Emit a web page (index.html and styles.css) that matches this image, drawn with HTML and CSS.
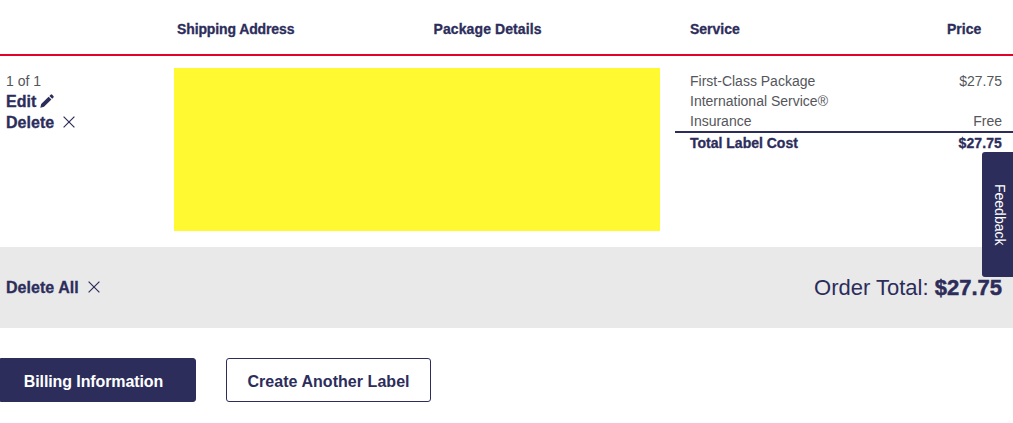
FILE: index.html
```
<!DOCTYPE html>
<html lang="en">
<head>
    <meta charset="UTF-8">
    <title>Shipping Cart</title>
    <link rel="stylesheet" href="styles.css">
</head>
<body>

<div class="cart">
    <div class="row cart_head">
        <div></div>
        <div class="ship">Shipping Address</div>
        <div class="pack">Package Details</div>
        <div>Service</div>
        <div>Price</div>
    </div>

    <div class="row cart_item">
        <div class="actions">
            <p class="count">1 of 1</p>
            <a class="link"><span>Edit</span>
                <svg class="pencil" width="14" height="14" viewBox="0 0 14 14"><path d="M.3 13.7l.9-3.7 7.4-7.3 2.8 2.8L4 12.8zM9.4 1.9l1.2-1.2q.8-.7 1.6 0l1.2 1.2q.7.8 0 1.6l-1.2 1.2z"/></svg>
            </a>
            <a class="link"><span>Delete</span>
                <svg class="cross" width="12" height="12" viewBox="0 0 12 12"><path d="M.6.6l10.8 10.8M11.4.6L.6 11.4"/></svg>
            </a>
        </div>
        <div class="details"></div>
        <div class="costs">
            <div class="cost"><span>First-Class Package<br>International Service®</span><span>$27.75</span></div>
            <div class="cost"><span>Insurance</span><span>Free</span></div>
            <div class="cost total"><span>Total Label Cost</span><span class="sum">$27.75</span></div>
        </div>
    </div>

    <div class="cart_foot">
        <a class="link"><span>Delete All</span>
            <svg class="cross" width="12" height="12" viewBox="0 0 12 12"><path d="M.6.6l10.8 10.8M11.4.6L.6 11.4"/></svg>
        </a>
        <p class="order"><span>Order Total:</span> <strong>$27.75</strong></p>
    </div>

    <div class="buttons">
        <button class="btn btn_primary">Billing Information</button>
        <button class="btn">Create Another Label</button>
    </div>
</div>

<a class="feedback">Feedback</a>

</body>
</html>
```

FILE: styles.css
```
*{
    box-sizing: border-box;
}
body{
    margin:0;
    height:423px;
    overflow: hidden;
    background: #fff;
    color:#54565b;
    font-family: "Liberation Sans", Arial, sans-serif;
    font-size:14px;
    line-height: 20px;
}
p{
    margin:0;
}
.row{
    display: grid;
}
/* header */
.cart_head{
    grid-template-columns: 177px 256.5px 256.5px 257px 1fr;
    align-items: center;
    height:56px;
    padding-top:4px;
    border-bottom:2px solid #e2012b;
    color:#2c2d5b;
    font-weight: bold;
    -webkit-text-stroke: .3px;
}
.ship{
    letter-spacing: -0.12px;
}
.pack{
    letter-spacing: 0.1px;
}
/* package row */
.cart_item{
    grid-template-columns: 174px 486px 1fr;
    height:191px;
    padding-top:12px;
}
.actions{
    padding:3px 0 0 6px;
}
.count{
    height:20px;
}
.link{
    display: flex;
    align-items: center;
    height:21px;
    color:#2c2d5b;
    font-size:16px;
    font-weight: bold;
    letter-spacing: 0.05px;
    line-height: 21px;
    -webkit-text-stroke: .3px;
}
.pencil{
    margin-left:4px;
    margin-top:-1px;
    fill:#2c2d5b;
    stroke:none;
}
.cross{
    margin-left:9px;
    margin-top:-2px;
    fill:none;
    stroke:#2c2d5b;
    stroke-width: 1.2;
}
.details{
    height:163px;
    background: #fff931;
}
.costs{
    padding:3px 0 0 15px;
}
.cost{
    display: flex;
    justify-content: space-between;
    padding:0 11px 0 15px;
}
.total{
    height:24px;
    border-top:2px solid #2c2d5b;
    color:#2c2d5b;
    font-weight: bold;
    line-height: 21px;
    -webkit-text-stroke: .3px;
}
.sum{
    letter-spacing: 0.1px;
}
/* grey total bar */
.cart_foot{
    display: flex;
    justify-content: space-between;
    align-items: center;
    height:81px;
    padding:0 11px 0 6px;
    background: #e9e9e9;
}
.order{
    color:#2c2d5b;
    font-size:22px;
    line-height: 26px;
}
.order strong{
    -webkit-text-stroke: .5px;
}
.buttons{
    display: flex;
    gap:30px;
    padding-top:30px;
}
.btn{
    width:205px;
    height:44px;
    padding:4px 0 0;
    border:1px solid #2c2d5b;
    border-radius: 3px;
    background: #fff;
    color:#2c2d5b;
    font-family: inherit;
    font-size:16px;
    font-weight: bold;
    letter-spacing: 0.05px;
}
.btn_primary{
    width:196px;
    padding-right:9px;
    border-radius: 0 3px 3px 0;
    background: #2c2d5b;
    color:#fff;
    letter-spacing: -0.1px;
}
/* side tab over the page */
.feedback{
    position: absolute;
    top:152px;
    right:0;
    width:31px;
    height:125px;
    border-radius: 3px 0 0 3px;
    background: #2c2d5b;
    color:#fff;
    line-height: 27px;
    text-align: center;
    writing-mode: vertical-rl;
}
```
